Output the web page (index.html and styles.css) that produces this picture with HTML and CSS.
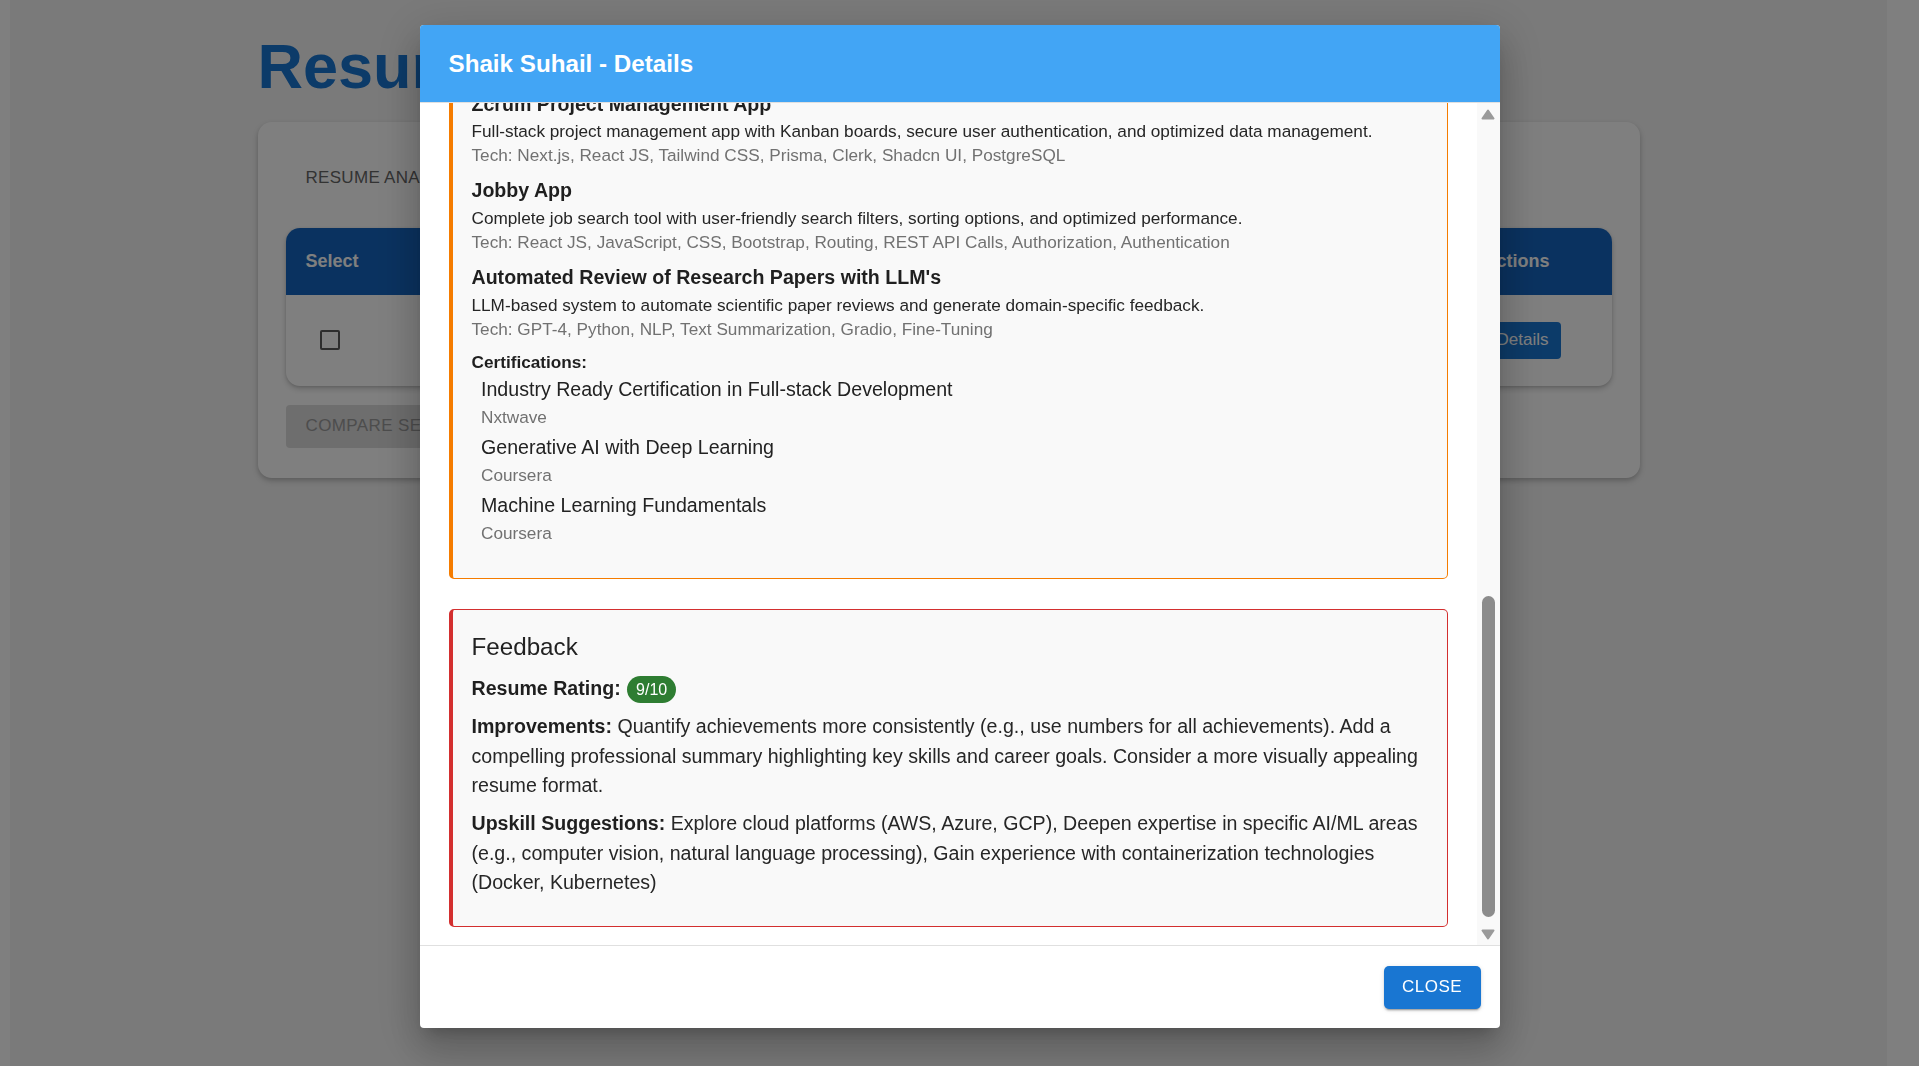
FILE: index.html
```html
<!DOCTYPE html>
<html lang="en">
<head>
<meta charset="utf-8">
<title>Resume Analyzer</title>
<link rel="stylesheet" href="styles.css">
</head>
<body>
<div class="page">
  <div class="container">
    <h1 class="page-title">Resume Analyzer</h1>
    <div class="panel">
      <div class="tabs"><span class="tab">Resume Analysis Results</span></div>
      <div class="table">
        <div class="thead">
          <div class="th">Select</div>
          <div class="th">Name</div>
          <div class="th">Email</div>
          <div class="th">Rating</div>
          <div class="th">Actions</div>
        </div>
        <div class="trow">
          <div class="td"><span class="checkbox"></span></div>
          <div class="td">Shaik Suhail</div>
          <div class="td">shaiksuhail@example.com</div>
          <div class="td">9/10</div>
          <div class="td"><button class="details-btn">Details</button></div>
        </div>
      </div>
      <button class="compare-btn">Compare Selected</button>
    </div>
  </div>
</div>

<div class="backdrop">
  <div class="dialog">
    <div class="dialog-title">Shaik Suhail - Details</div>
    <div class="dialog-body">
      <div class="viewport">
        <div class="scroll-content">
          <section class="card card-orange">
            <div class="project">
              <div class="project-name">Zcrum Project Management App</div>
              <div class="project-desc">Full-stack project management app with Kanban boards, secure user authentication, and optimized data management.</div>
              <div class="project-tech">Tech: Next.js, React JS, Tailwind CSS, Prisma, Clerk, Shadcn UI, PostgreSQL</div>
            </div>
            <div class="project">
              <div class="project-name">Jobby App</div>
              <div class="project-desc">Complete job search tool with user-friendly search filters, sorting options, and optimized performance.</div>
              <div class="project-tech">Tech: React JS, JavaScript, CSS, Bootstrap, Routing, REST API Calls, Authorization, Authentication</div>
            </div>
            <div class="project">
              <div class="project-name">Automated Review of Research Papers with LLM's</div>
              <div class="project-desc">LLM-based system to automate scientific paper reviews and generate domain-specific feedback.</div>
              <div class="project-tech">Tech: GPT-4, Python, NLP, Text Summarization, Gradio, Fine-Tuning</div>
            </div>
            <div class="section-label">Certifications:</div>
            <ul class="cert-list">
              <li class="cert">
                <div class="cert-name">Industry Ready Certification in Full-stack Development</div>
                <div class="cert-issuer">Nxtwave</div>
              </li>
              <li class="cert">
                <div class="cert-name">Generative AI with Deep Learning</div>
                <div class="cert-issuer">Coursera</div>
              </li>
              <li class="cert">
                <div class="cert-name">Machine Learning Fundamentals</div>
                <div class="cert-issuer">Coursera</div>
              </li>
            </ul>
          </section>

          <section class="card card-red">
            <h3 class="feedback-title">Feedback</h3>
            <p class="fb-line"><strong>Resume Rating:</strong> <span class="badge">9/10</span></p>
            <p class="fb-line"><strong>Improvements:</strong> Quantify achievements more consistently (e.g., use numbers for all achievements). Add a compelling professional summary highlighting key skills and career goals. Consider a more visually appealing resume format.</p>
            <p class="fb-line"><strong>Upskill Suggestions:</strong> Explore cloud platforms (AWS, Azure, GCP), Deepen expertise in specific AI/ML areas (e.g., computer vision, natural language processing), Gain experience with containerization technologies (Docker, Kubernetes)</p>
          </section>
        </div>
      </div>
      <div class="scrollbar">
        <svg class="sb-arrow sb-up" width="14" height="11" viewBox="0 0 14 11"><polygon points="7,1.5 12.5,9.5 1.5,9.5" fill="#9a9a9a" stroke="#9a9a9a" stroke-width="2" stroke-linejoin="round"/></svg>
        <div class="sb-track">
          <div class="sb-thumb" style="margin-top:476px;height:321px"></div>
        </div>
        <svg class="sb-arrow sb-down" width="14" height="11" viewBox="0 0 14 11"><polygon points="1.5,1.5 12.5,1.5 7,9.5" fill="#9a9a9a" stroke="#9a9a9a" stroke-width="2" stroke-linejoin="round"/></svg>
      </div>
    </div>
    <div class="dialog-actions">
      <button class="close-btn">Close</button>
    </div>
  </div>
</div>
</body>
</html>
```

FILE: styles.css
```css
* {
  box-sizing: border-box;
}

html, body {
  margin: 0;
  padding: 0;
  height: 100%;
}

body {
  background: #ffffff;
  font-family: "Liberation Sans", Arial, sans-serif;
  color: #212121;
  overflow: hidden;
}

/* ---------- background page ---------- */
.page {
  margin-left: 10px;
  width: 1877px;
  height: 100vh;
  background: #f4f4f4;
}

.container {
  width: 1382px;
  margin: 0 auto;
  padding-top: 29px;
}

.page-title {
  margin: 0 0 17px 0;
  font-size: 63px;
  line-height: 1.2;
  font-weight: 700;
  color: #1976d2;
}

.panel {
  background: #ffffff;
  border-radius: 14px;
  padding: 28px 28px 30px;
  box-shadow: 0 3px 6px rgba(0, 0, 0, 0.16), 0 2px 4px rgba(0, 0, 0, 0.1);
}

.tabs {
  height: 56px;
  display: flex;
  align-items: center;
  margin-bottom: 22px;
}

.tab {
  padding-left: 20px;
  font-size: 17px;
  text-transform: uppercase;
  letter-spacing: 0.3px;
  color: #666666;
}

.table {
  border-radius: 14px;
  overflow: hidden;
  background: #ffffff;
  box-shadow: 0 3px 6px rgba(0, 0, 0, 0.18), 0 1px 3px rgba(0, 0, 0, 0.12);
}

.thead,
.trow {
  display: grid;
  grid-template-columns: 180px 1fr 1fr 1fr 148px;
  align-items: center;
}

.thead {
  height: 67px;
  background: #1565c0;
}

.th {
  padding: 0 20px;
  font-size: 18px;
  font-weight: 700;
  color: #ffffff;
}

.trow {
  height: 91px;
}

.td {
  padding: 0 20px;
  font-size: 17px;
}

.checkbox {
  display: block;
  width: 20px;
  height: 20px;
  margin-left: 14px;
  border: 2px solid #5c5c5c;
  border-radius: 2px;
}

.details-btn {
  height: 37px;
  padding: 0 13px;
  border: none;
  border-radius: 4px;
  background: #1976d2;
  color: #ffffff;
  font-family: "Liberation Sans", Arial, sans-serif;
  font-size: 17px;
}

.compare-btn {
  margin-top: 19px;
  height: 43px;
  padding: 0 20px;
  border: none;
  border-radius: 4px;
  background: #dcdcdc;
  color: #9a9a9a;
  font-family: "Liberation Sans", Arial, sans-serif;
  font-size: 17px;
  text-transform: uppercase;
  letter-spacing: 0.4px;
}

/* ---------- dialog ---------- */
.backdrop {
  position: fixed;
  inset: 0;
  background: rgba(0, 0, 0, 0.5);
  display: flex;
  justify-content: center;
  align-items: flex-start;
  padding-top: 25px;
}

.dialog {
  width: 1080px;
  height: 1003px;
  background: #ffffff;
  border-radius: 4px;
  overflow: hidden;
  display: flex;
  flex-direction: column;
  box-shadow: 0 11px 15px -7px rgba(0, 0, 0, 0.2), 0 24px 38px 3px rgba(0, 0, 0, 0.14), 0 9px 46px 8px rgba(0, 0, 0, 0.12);
}

.dialog-title {
  flex-shrink: 0;
  height: 77px;
  display: flex;
  align-items: center;
  padding: 0 29px;
  background: #42a5f5;
  color: #ffffff;
  font-size: 24.2px;
  font-weight: 700;
}

.dialog-body {
  flex: 1;
  min-height: 0;
  display: flex;
  border-top: 1px solid #e0e0e0;
  border-bottom: 1px solid #e0e0e0;
}

.viewport {
  flex: 1;
  min-width: 0;
  overflow: hidden;
  padding: 0 29px;
}

.scroll-content {
  margin-top: -34px;
}

.card {
  background: #f9f9f9;
  border: 1px solid;
  border-left-width: 4px;
  border-radius: 5px;
  padding: 19.5px 19.5px 19.5px 19px;
}

.card-orange {
  border-color: #f57c00;
}

.card-red {
  border-color: #d32f2f;
  margin-top: 30px;
}

.project {
  margin-bottom: 9px;
}

.project-name {
  font-size: 19.6px;
  line-height: 29.3px;
  font-weight: 700;
  color: #1f1f1f;
}

.project-desc {
  font-size: 17.2px;
  line-height: 24.3px;
  color: #262626;
}

.project-tech {
  font-size: 17.2px;
  line-height: 24.3px;
  color: #717171;
}

.section-label {
  margin-top: 2px;
  font-size: 17.2px;
  line-height: 24.3px;
  font-weight: 700;
  color: #1f1f1f;
}

.cert-list {
  list-style: none;
  margin: 0;
  padding: 1px 0 9px 9.5px;
}

.cert {
  margin-bottom: 4.3px;
}

.cert-name {
  font-size: 19.6px;
  line-height: 29.3px;
  color: #222222;
}

.cert-issuer {
  font-size: 17.2px;
  line-height: 24.3px;
  color: #717171;
}

.feedback-title {
  margin: 0 0 9px;
  font-size: 24.2px;
  line-height: 36px;
  font-weight: 400;
  color: #222222;
}

.fb-line {
  margin: 0 0 9px;
  font-size: 19.6px;
  line-height: 29.3px;
  color: #262626;
}

.fb-line strong {
  font-weight: 700;
  color: #1f1f1f;
}

.badge {
  display: inline-block;
  height: 27px;
  line-height: 27px;
  padding: 0 9px;
  margin-left: 1px;
  border-radius: 14px;
  background: #2e7d32;
  color: #ffffff;
  font-size: 16px;
}

/* ---------- fake scrollbar ---------- */
.scrollbar {
  width: 23px;
  flex-shrink: 0;
  background: #f9f9f9;
  display: flex;
  flex-direction: column;
  align-items: center;
}

.sb-arrow {
  display: block;
  flex-shrink: 0;
}

.sb-up {
  margin-top: 6px;
}

.sb-down {
  margin-bottom: 5px;
}

.sb-track {
  flex: 1;
  width: 100%;
  display: flex;
  flex-direction: column;
  align-items: center;
}

.sb-thumb {
  width: 13px;
  border-radius: 7px;
  background: #8c8c8c;
}

/* ---------- footer ---------- */
.dialog-actions {
  flex-shrink: 0;
  height: 82px;
  display: flex;
  justify-content: flex-end;
  align-items: center;
  padding-right: 19px;
}

.close-btn {
  width: 97px;
  height: 43px;
  border: none;
  border-radius: 5px;
  background: #1976d2;
  color: #ffffff;
  font-family: "Liberation Sans", Arial, sans-serif;
  font-size: 17px;
  letter-spacing: 0.5px;
  text-transform: uppercase;
  box-shadow: 0 3px 1px -2px rgba(0, 0, 0, 0.2), 0 2px 2px rgba(0, 0, 0, 0.14), 0 1px 5px rgba(0, 0, 0, 0.12);
}
```
